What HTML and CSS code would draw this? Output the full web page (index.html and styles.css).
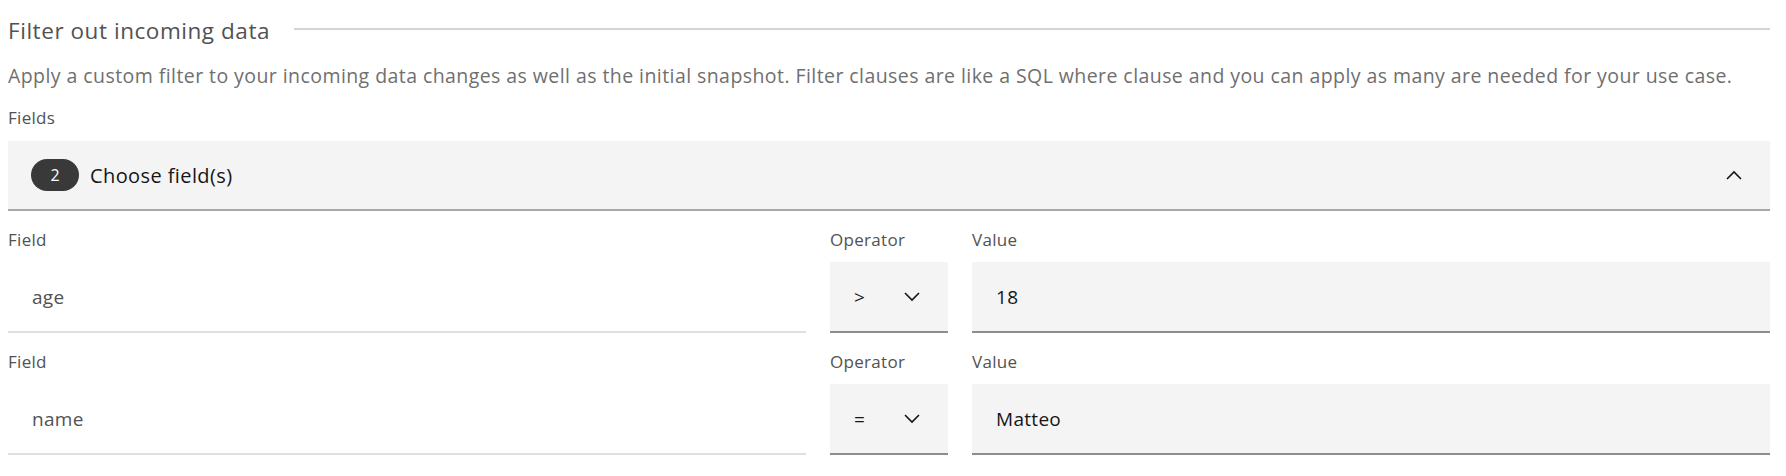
FILE: index.html
```html
<!DOCTYPE html>
<html lang="en">
<head>
<meta charset="utf-8">
<title>Filter out incoming data</title>
<link rel="stylesheet" href="styles.css">
</head>
<body>
<section class="filter">
  <div class="heading">
    <h2 class="title">Filter out incoming data</h2>
    <div class="rule"></div>
  </div>
  <p class="desc">Apply a custom filter to your incoming data changes as well as the initial snapshot. Filter clauses are like a SQL where clause and you can apply as many are needed for your use case.</p>
  <div class="label">Fields</div>
  <div class="multiselect">
    <span class="badge">2</span>
    <span class="ms-text">Choose field(s)</span>
    <svg class="chev-up" width="16" height="10" viewBox="0 0 16 10"><path d="M1 9 L8 2 L15 9" fill="none" stroke="#161616" stroke-width="1.6"/></svg>
  </div>
  <div class="clause">
    <div class="col">
      <div class="label">Field</div>
      <div class="input readonly">age</div>
    </div>
    <div class="col">
      <div class="label">Operator</div>
      <div class="input select"><span>&gt;</span><svg width="16" height="10" viewBox="0 0 16 10"><path d="M1 1 L8 8 L15 1" fill="none" stroke="#161616" stroke-width="1.6"/></svg></div>
    </div>
    <div class="col">
      <div class="label">Value</div>
      <div class="input filled">18</div>
    </div>
  </div>
  <div class="clause">
    <div class="col">
      <div class="label">Field</div>
      <div class="input readonly">name</div>
    </div>
    <div class="col">
      <div class="label">Operator</div>
      <div class="input select"><span>=</span><svg width="16" height="10" viewBox="0 0 16 10"><path d="M1 1 L8 8 L15 1" fill="none" stroke="#161616" stroke-width="1.6"/></svg></div>
    </div>
    <div class="col">
      <div class="label">Value</div>
      <div class="input filled">Matteo</div>
    </div>
  </div>
</section>
</body>
</html>
```
FILE: styles.css
```css
html, body {
  margin: 0;
  padding: 0;
  background: #ffffff;
}
body {
  font-family: "Open Sans", "Noto Sans", "Liberation Sans", sans-serif;
  color: #161616;
}
.filter {
  padding: 17px 16px 0 8px;
}
.heading {
  display: flex;
  align-items: center;
  gap: 24px;
  height: 28px;
}
.title {
  margin: 0;
  font-size: 22.5px;
  font-weight: 400;
  line-height: 28px;
  letter-spacing: 0.55px;
  color: #525252;
  white-space: nowrap;
}
.rule {
  flex: 1;
  border-top: 2px solid #d4d4d4;
  margin-bottom: 4px;
}
.desc {
  margin: 18px 0 0;
  font-size: 19.5px;
  line-height: 26px;
  letter-spacing: 0.43px;
  color: #6f6f6f;
  white-space: nowrap;
}
.label {
  font-size: 17px;
  line-height: 20px;
  color: #525252;
  letter-spacing: 0.3px;
}
.desc + .label {
  margin-top: 19px;
}
.multiselect {
  margin-top: 13px;
  height: 70px;
  box-sizing: border-box;
  background: #f4f4f4;
  border-bottom: 2px solid #a8a8a8;
  display: flex;
  align-items: center;
  padding: 0 28px 0 23px;
}
.badge {
  width: 48px;
  height: 32px;
  border-radius: 16px;
  background: #393939;
  color: #ffffff;
  font-size: 16px;
  display: flex;
  align-items: center;
  justify-content: center;
}
.ms-text {
  margin-left: 11px;
  font-size: 20px;
  letter-spacing: 0.4px;
  color: #161616;
  flex: 1;
}
.clause {
  display: grid;
  grid-template-columns: 1fr 118px 1fr;
  column-gap: 24px;
  margin-top: 19px;
}
.col .label {
  margin-bottom: 12px;
}
.input {
  height: 71px;
  display: flex;
  align-items: center;
  padding: 0 24px;
  font-size: 19px;
  letter-spacing: 0.3px;
  box-sizing: border-box;
}
.input.readonly {
  color: #525252;
  border-bottom: 2px solid #e0e0e0;
}
.input.select {
  background: #f4f4f4;
  border-bottom: 2px solid #8d8d8d;
  justify-content: space-between;
  padding: 0 28px 0 24px;
  color: #161616;
}
.input.filled {
  background: #f4f4f4;
  border-bottom: 2px solid #8d8d8d;
  color: #161616;
}
```
